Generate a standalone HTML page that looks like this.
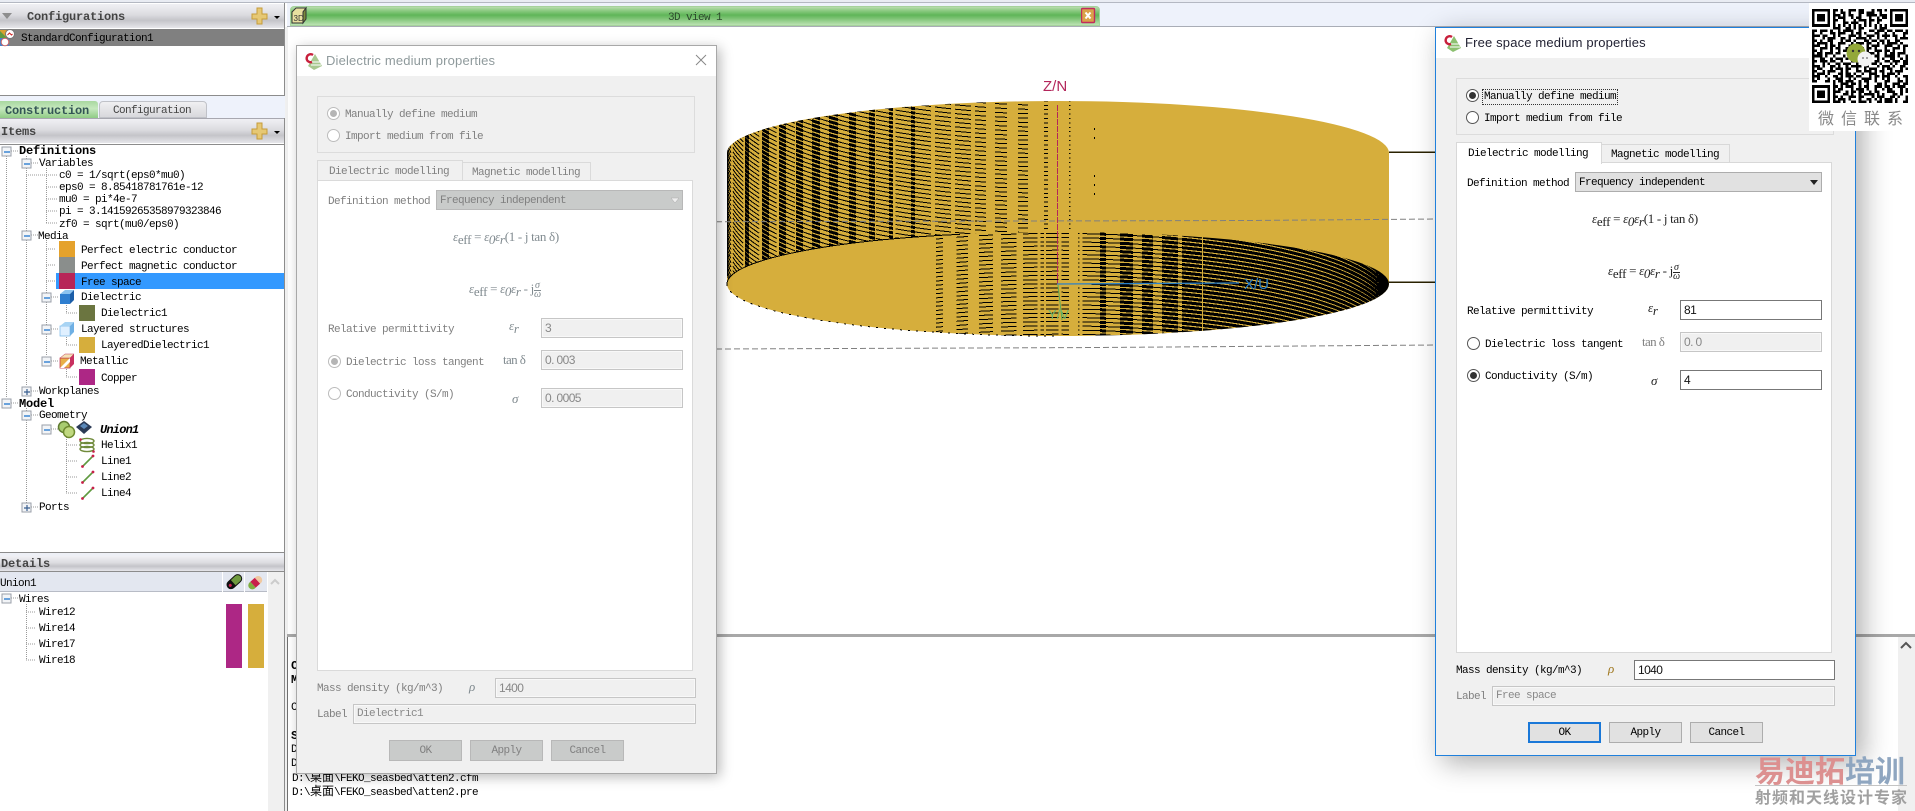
<!DOCTYPE html>
<html lang="en"><head><meta charset="utf-8"><title>FEKO</title>
<style>
html,body{margin:0;padding:0;background:#fff}
#p{position:relative;width:1915px;height:811px;overflow:hidden;background:#fff}
.a{position:absolute}
.t{position:absolute;margin-top:1px;white-space:pre;font:11px/12px "Liberation Mono","Noto Sans CJK SC",monospace;letter-spacing:-.6px;color:#000}
.b{font:bold 12px/12px "Liberation Mono","Noto Sans CJK SC",monospace;letter-spacing:-.2px}
.cj{font:12px/12px "Noto Sans CJK SC",sans-serif;letter-spacing:0}
.hd{position:absolute;left:0;width:284px;background:linear-gradient(#f0f0f4 0,#dcdce0 45%,#c4c4c9 68%,#e6e6ea 100%)}
.dlg{position:absolute;width:419px;height:727px;background:#f0f0f0;border:1px solid #a8a8a8;box-shadow:3px 3px 12px rgba(0,0,0,.28)}
.dlg .tb{position:absolute;left:0;top:0;width:419px;height:30px;background:#fff}
.dlg .ttl{position:absolute;left:29px;top:6px;white-space:pre;font:13px/17px "Liberation Sans",sans-serif;letter-spacing:.16px;color:#8f9a9c}
.gr{position:absolute;left:20px;top:50px;width:376px;height:55px;border:1px solid #dcdcdc}
.tab{position:absolute;box-sizing:border-box;border:1px solid #d8d8d8;border-bottom:0}
.pane{position:absolute;left:20px;top:134px;width:374px;height:489px;background:#fff;border:1px solid #d8d8d8}
.r{position:absolute;box-sizing:border-box;width:13px;height:13px;border:1px solid #555;border-radius:50%;background:#fff}
.r.on:after{content:"";position:absolute;left:2px;top:2px;width:7px;height:7px;border-radius:50%;background:#333}
.in{position:absolute;box-sizing:border-box;height:20px;background:#fff;border:1px solid #777}
.in.dis{background:#f0f0f0;border:1px solid #c6c6c6;box-shadow:inset 0 0 0 1px #f8f8f8}
.in span{position:absolute;left:3px;top:3px;white-space:pre;font:12px/13px "Liberation Sans",sans-serif;letter-spacing:-.6px;color:#111}
.in.dis span{color:#888}
.in.m span{font:11px/13px "Liberation Mono",monospace}
.cb{position:absolute;box-sizing:border-box;left:139px;top:144px;width:247px;height:20px;background:#e1e1e1;border:1px solid #adadad}
.btn{position:absolute;box-sizing:border-box;top:694px;width:73px;height:21px;background:#e1e1e1;border:1px solid #adadad;text-align:center;font:11px/20px "Liberation Mono",monospace;letter-spacing:-.6px;color:#000}
.f{position:absolute;white-space:pre;font:13px/16px "Liberation Serif",serif;color:#222;letter-spacing:-.3px}
.f i{font-style:italic}
.f u{text-decoration:none;position:relative;top:3px}
.d1 .t{color:#808080}
.d1 .f{color:#808a8f}
.d1 .tab,.d1 .pane{border-color:#dadada}
.d1 .cb{background:#c9cbca;border-color:#b8b8b8}
.d1 .btn{background:#c9cbca;border-color:#b8b8b8;color:#808080}
.d1 .r{border-color:#bcbcbc}
.d1 .r.on:after{background:#b5b5b5}
.d2{border:1px solid #1f80dc;box-shadow:7px 7px 26px rgba(0,0,0,.32);}
.d2 .ttl{color:#223}
.g{color:#808080!important}
</style></head><body><div id="p">

<!-- top strip / tab bar -->
<div class="a" style="left:0;top:0;width:1915px;height:2px;background:#e9ecf3"></div>
<div class="a" style="left:0;top:2px;width:1915px;height:1px;background:#b4b8c2"></div>
<div class="a" style="left:287px;top:3px;width:1628px;height:23px;background:#eef2fb"></div>
<div class="a" style="left:287px;top:26px;width:1628px;height:1px;background:#a9adb6"></div>
<div class="a" style="left:290px;top:6px;width:810px;height:20px;box-sizing:border-box;border:1px solid #a6d29c;border-radius:4px 4px 0 0;background:linear-gradient(#b8dcae 0,#8ccb82 20%,#5fb558 45%,#7fc476 65%,#bbe2b2 100%)"></div>
<div class="t" style="left:668px;top:11px;color:#2c4a2c">3D view 1</div>
<svg class="a" style="left:291px;top:6px" width="18" height="19" viewBox="0 0 18 19"><path d="M1 6L5 2H15L12 6V17H1Z" fill="#e8e0a0" stroke="#333"/><path d="M12 6L15 2V13L12 17Z" fill="#7b8a3c" stroke="#333"/><text x="2.5" y="15" font-family="Liberation Sans" font-size="8" fill="#333">3D</text></svg>
<svg class="a" style="left:1081px;top:7px" width="15" height="17"><rect x=".5" y="1.5" width="13" height="14" fill="#d9a24a" stroke="#c22b5c" stroke-width="1.4" rx="1"/><path d="M4.5 5.5L9.5 11.5M9.5 5.5L4.5 11.5" stroke="#fff" stroke-width="2"/></svg>

<!-- 3D view -->
<svg class="a" style="left:0;top:0" width="1915" height="811">
<defs>
<path id="wl" d="M727 1a331 100 0 0 0 662 0m-662 4.4a331 100 0 0 0 662 0m-662 4.4a331 100 0 0 0 662 0m-662 4.4a331 100 0 0 0 662 0m-662 4.4a331 100 0 0 0 662 0m-662 4.4a331 100 0 0 0 662 0m-662 4.4a331 100 0 0 0 662 0m-662 4.4a331 100 0 0 0 662 0m-662 4.4a331 100 0 0 0 662 0m-662 4.4a331 100 0 0 0 662 0m-662 4.4a331 100 0 0 0 662 0m-662 4.4a331 100 0 0 0 662 0m-662 4.4a331 100 0 0 0 662 0m-662 4.4a331 100 0 0 0 662 0m-662 4.4a331 100 0 0 0 662 0m-662 4.4a331 100 0 0 0 662 0m-662 4.4a331 100 0 0 0 662 0m-662 4.4a331 100 0 0 0 662 0m-662 4.4a331 100 0 0 0 662 0m-662 4.4a331 100 0 0 0 662 0m-662 4.4a331 100 0 0 0 662 0m-662 4.4a331 100 0 0 0 662 0m-662 4.4a331 100 0 0 0 662 0m-662 4.4a331 100 0 0 0 662 0m-662 4.4a331 100 0 0 0 662 0m-662 4.4a331 100 0 0 0 662 0m-662 4.4a331 100 0 0 0 662 0m-662 4.4a331 100 0 0 0 662 0m-662 4.4a331 100 0 0 0 662 0m-662 4.4a331 100 0 0 0 662 0m-662 4.4a331 100 0 0 0 662 0m-662 4.4a331 100 0 0 0 662 0m-662 4.4a331 100 0 0 0 662 0m-662 4.4a331 100 0 0 0 662 0m-662 4.4a331 100 0 0 0 662 0m-662 4.4a331 100 0 0 0 662 0m-662 4.4a331 100 0 0 0 662 0m-662 4.4a331 100 0 0 0 662 0m-662 4.4a331 100 0 0 0 662 0m-662 4.4a331 100 0 0 0 662 0m-662 4.4a331 100 0 0 0 662 0m-662 4.4a331 100 0 0 0 662 0m-662 4.4a331 100 0 0 0 662 0m-662 4.4a331 100 0 0 0 662 0m-662 4.4a331 100 0 0 0 662 0m-662 4.4a331 100 0 0 0 662 0m-662 4.4a331 100 0 0 0 662 0m-662 4.4a331 100 0 0 0 662 0m-662 4.4a331 100 0 0 0 662 0m-662 4.4a331 100 0 0 0 662 0m-662 4.4a331 100 0 0 0 662 0m-662 4.4a331 100 0 0 0 662 0m-662 4.4a331 100 0 0 0 662 0m-662 4.4a331 100 0 0 0 662 0m-662 4.4a331 100 0 0 0 662 0m-662 4.4a331 100 0 0 0 662 0m-662 4.4a331 100 0 0 0 662 0m-662 4.4a331 100 0 0 0 662 0m-662 4.4a331 100 0 0 0 662 0m-662 4.4a331 100 0 0 0 662 0m-662 4.4a331 100 0 0 0 662 0m-662 4.4a331 100 0 0 0 662 0" fill="none" stroke="#000"/>
<path id="fl" d="M727 284a331 80 0 0 1 662 0m-662 4.2a331 80 0 0 1 662 0m-662 4.2a331 80 0 0 1 662 0m-662 4.2a331 80 0 0 1 662 0m-662 4.2a331 80 0 0 1 662 0m-662 4.2a331 80 0 0 1 662 0m-662 4.2a331 80 0 0 1 662 0m-662 4.2a331 80 0 0 1 662 0m-662 4.2a331 80 0 0 1 662 0m-662 4.2a331 80 0 0 1 662 0m-662 4.2a331 80 0 0 1 662 0m-662 4.2a331 80 0 0 1 662 0m-662 4.2a331 80 0 0 1 662 0m-662 4.2a331 80 0 0 1 662 0m-662 4.2a331 80 0 0 1 662 0m-662 4.2a331 80 0 0 1 662 0m-662 4.2a331 80 0 0 1 662 0m-662 4.2a331 80 0 0 1 662 0m-662 4.2a331 80 0 0 1 662 0m-662 4.2a331 80 0 0 1 662 0m-662 4.2a331 80 0 0 1 662 0m-662 4.2a331 80 0 0 1 662 0m-662 4.2a331 80 0 0 1 662 0m-662 4.2a331 80 0 0 1 662 0m-662 4.2a331 80 0 0 1 662 0m-662 4.2a331 80 0 0 1 662 0m-662 4.2a331 80 0 0 1 662 0m-662 4.2a331 80 0 0 1 662 0m-662 4.2a331 80 0 0 1 662 0m-662 4.2a331 80 0 0 1 662 0m-662 4.2a331 80 0 0 1 662 0m-662 4.2a331 80 0 0 1 662 0" fill="none" stroke="#000"/>
<clipPath id="cw"><path d="M727 153A331 52 0 0 1 1389 153L1389 284A331 52 0 0 0 727 284Z"/></clipPath>
<clipPath id="cf"><ellipse cx="1058" cy="284" rx="331" ry="52"/></clipPath>
<clipPath id="wthin"><rect x="727" y="90" width="197" height="250"/><rect x="924" y="90" width="62" height="250"/><rect x="995" y="90" width="12" height="250"/><rect x="1018" y="90" width="10" height="250"/><rect x="1044" y="90" width="4" height="250"/><rect x="1069" y="90" width="4" height="250"/></clipPath>
<clipPath id="wthick"><rect x="745" y="90" width="4" height="250"/><rect x="762" y="90" width="7" height="250"/><rect x="779" y="90" width="7" height="250"/><rect x="796" y="90" width="7" height="250"/><rect x="812" y="90" width="8" height="250"/><rect x="829" y="90" width="9" height="250"/><rect x="849" y="90" width="7" height="250"/><rect x="869" y="90" width="6" height="250"/><rect x="889" y="90" width="4" height="250"/><rect x="911" y="90" width="4" height="250"/></clipPath>
<clipPath id="fthin"><rect x="936" y="220" width="7" height="130"/><rect x="956" y="220" width="12" height="130"/><rect x="979" y="220" width="14" height="130"/><rect x="1001" y="220" width="17" height="130"/><rect x="1023" y="220" width="21" height="130"/><rect x="1046" y="220" width="23" height="130"/><rect x="1078" y="220" width="22" height="130"/><rect x="1106" y="220" width="14" height="130"/><rect x="1133" y="220" width="9" height="130"/><rect x="1153" y="220" width="9" height="130"/><rect x="1178" y="220" width="4" height="130"/></clipPath>
<clipPath id="fthick"><rect x="1100" y="220" width="6" height="130"/><rect x="1120" y="220" width="13" height="130"/><rect x="1142" y="220" width="11" height="130"/><rect x="1162" y="220" width="16" height="130"/><rect x="1182" y="220" width="20" height="130"/><rect x="1203" y="220" width="186" height="130"/></clipPath>
</defs>
<path d="M727 153A331 52 0 0 1 1389 153L1389 284A331 52 0 0 1 727 284Z" fill="#d6ae3c"/>
<g shape-rendering="crispEdges">
<g clip-path="url(#cw)"><g clip-path="url(#wthin)"><use href="#wl" stroke-width="1" stroke-dasharray="16 4"/></g><g clip-path="url(#wthick)"><use href="#wl" stroke-width="3"/></g></g>
<g clip-path="url(#cf)"><g clip-path="url(#fthin)"><use href="#fl" stroke-width="1" stroke-dasharray="18 3"/></g><g clip-path="url(#fthick)"><use href="#fl" stroke-width="3"/></g></g>
<path d="M727 284A331 52 0 0 1 960 234.3" fill="none" stroke="#000"/>
<path d="M727 284A331 52 0 0 0 1058 336" fill="none" stroke="#000" stroke-dasharray="2 6"/>
<path d="M1094 128h1v2h-1zM1094 137h1v2h-1zM1094 175h1v2h-1zM1094 184h1v2h-1zM1094 193h1v2h-1z" fill="#000"/>
<path d="M1389 152h47M1389 282h47" stroke="#2a2200" stroke-width="1.5" fill="none"/>
</g>
<path d="M590 222L1250 220.5L1436 219" stroke="#808080" stroke-width="1" stroke-dasharray="6 3" fill="none"/>
<path d="M716 349L1100 347.5L1436 345" stroke="#808080" stroke-width="1" stroke-dasharray="6 3" fill="none"/>
<path d="M1057.5 105V284" stroke="#b3255a" stroke-width="1" stroke-dasharray="6 1" fill="none"/>
<path d="M1057 284L1239 283" stroke="#2a80c8" stroke-width="1.2" fill="none"/>
<path d="M1058 285L1062 320" stroke="#5aab5a" stroke-width="1" fill="none"/>
<text x="1043" y="91" font-family="Liberation Sans" font-size="15" fill="#b3255a">Z/N</text>
<text x="1244" y="289" font-family="Liberation Sans" font-size="15" fill="#2a80c8">X/U</text>
<text x="1048" y="319" font-family="Liberation Sans" font-size="13" fill="#6cb76c">Y/V</text>
</svg>

<!-- Console -->
<div class="a" style="left:285px;top:27px;width:3px;height:784px;background:#f0f0f0"></div>
<div class="a" style="left:287px;top:634px;width:1628px;height:3px;background:#a8a8a8"></div>
<div class="a" style="left:287px;top:637px;width:1628px;height:174px;background:#fff"></div>
<div class="a" style="left:287px;top:637px;width:1px;height:174px;background:#707070"></div>
<div class="t b" style="left:291px;top:659px">C</div>
<div class="t b" style="left:291px;top:673px">M</div>
<div class="t" style="left:291px;top:701px">C</div>
<div class="t b" style="left:291px;top:729px">S</div>
<div class="t" style="left:291px;top:743px">D</div>
<div class="t" style="left:291px;top:757px">D</div>
<div class="t" style="left:292px;top:770px">D:\<span class="cj">桌面</span>\FEKO_seasbed\atten2.cfm</div>
<div class="t" style="left:292px;top:784px">D:\<span class="cj">桌面</span>\FEKO_seasbed\atten2.pre</div>
<div class="a" style="left:1898px;top:637px;width:17px;height:174px;background:#f0f0f0"></div>
<svg class="a" style="left:1899px;top:640px" width="14" height="12"><path d="M2 8L7 3L12 8" fill="none" stroke="#555" stroke-width="2"/></svg>

<!-- Left panel -->
<div class="a" style="left:0;top:0;width:285px;height:811px;background:#fff"></div>
<div class="a" style="left:0;top:0;width:285px;height:2px;background:#e9ecf3"></div>
<div class="a" style="left:0;top:2px;width:285px;height:1px;background:#b4b8c2"></div>
<div class="a" style="left:284px;top:3px;width:1px;height:808px;background:#8c8c8c"></div>
<div class="hd" style="top:4px;height:24px"></div>
<div class="t b" style="left:27px;top:10px;color:#444">Configurations</div>
<div class="a" style="left:0;top:29px;width:284px;height:17px;background:#808080"></div>
<div class="t" style="left:21px;top:32px;color:#000">StandardConfiguration1</div>
<div class="a" style="left:0;top:95px;width:284px;height:1px;background:#8c8c8c"></div>
<div class="a" style="left:0;top:96px;width:285px;height:22px;background:#eef2fb"></div>
<div class="a" style="left:0;top:101px;width:98px;height:17px;background:linear-gradient(#a9d8a0,#c6e8be 45%,#8fcb85);border-radius:0 3px 0 0"></div>
<div class="a" style="left:99px;top:101px;width:108px;height:17px;box-sizing:border-box;border:1px solid #c0c2c8;border-radius:4px 4px 0 0;background:linear-gradient(#f0f0f2,#d8d8dc)"></div>
<div class="t b" style="left:5px;top:104px;color:#355">Construction</div>
<div class="t" style="left:113px;top:104px;color:#444">Configuration</div>
<div class="a" style="left:0;top:118px;width:284px;height:1px;background:#a8a8b0"></div>
<div class="hd" style="top:119px;height:24px"></div>
<div class="t b" style="left:1px;top:125px;color:#444">Items</div>
<div class="a" style="left:0;top:144px;width:284px;height:1px;background:#8c8c8c"></div>
<div class="a" style="left:56px;top:273px;width:228px;height:16px;background:#3399ff"></div>
<div class="a" style="left:0;top:552px;width:284px;height:1px;background:#8c8c8c"></div>
<div class="a" style="left:0;top:553px;width:284px;height:3px;background:#eef0f6"></div>
<div class="hd" style="top:556px;height:15px"></div>
<div class="t b" style="left:1px;top:557px;color:#444">Details</div>
<div class="a" style="left:0;top:571px;width:284px;height:1px;background:#8c8c8c"></div>
<div class="a" style="left:0;top:572px;width:222px;height:19px;background:#e3e7f0;border-bottom:1px solid #b8bcc6"></div>
<div class="a" style="left:223px;top:572px;width:21px;height:19px;background:#e3e7f0;border-bottom:1px solid #b8bcc6"></div>
<div class="a" style="left:245px;top:572px;width:22px;height:19px;background:#e3e7f0;border-bottom:1px solid #b8bcc6"></div>
<div class="a" style="left:268px;top:572px;width:16px;height:239px;background:#f0f0f0"></div>
<div class="a" style="left:226px;top:604px;width:16px;height:64px;background:#ad2785"></div>
<div class="a" style="left:248px;top:604px;width:16px;height:64px;background:#d6ae3c"></div>

<svg class="a" style="left:0;top:0" width="285" height="811">
<defs>
<g id="mn"><rect x="-4.5" y="-4.5" width="9" height="9" fill="#f2f4f7" stroke="#9a9fa8"/><path d="M-2.5 .5h6" stroke="#2f7fd0" stroke-width="1.4"/></g>
<g id="pl"><rect x="-4.5" y="-4.5" width="9" height="9" fill="#f2f4f7" stroke="#9a9fa8"/><path d="M-2.5 .5h6M.5 -2.5v6" stroke="#3a5f90" stroke-width="1.2"/></g>
<path id="plus" d="M0 6h5V0h5v6h5v5h-5v5H5v-5H0z" fill="#e6c874" stroke="#c69c3a"/>
<g id="ln"><path d="M1 12L12 1" stroke="#5f9a3f" stroke-width="1.6"/><circle cx="1.5" cy="11.5" r="1.4" fill="#c8204a"/><circle cx="12" cy="1" r="1.4" fill="#c8204a"/></g>
</defs>
<path d="M2 13h10l-5 6z" fill="#8e8e8e"/>
<use href="#plus" x="252" y="8"/><path d="M274 16h6l-3 3z" fill="#000"/>
<use href="#plus" x="252" y="123"/><path d="M274 131h6l-3 3z" fill="#000"/>
<rect x="0" y="30" width="9" height="8" fill="#d9a030"/><path d="M0 31l7 7H0z" fill="#5f9a3f"/><rect x="0" y="38" width="9" height="8" fill="#4a80c8"/><circle cx="10" cy="34" r="4.5" fill="#fff" stroke="#777"/><path d="M7.500 35l2-2 2 2 1-1" stroke="#c22" fill="none"/><circle cx="5" cy="42" r="3.8" fill="#fff" stroke="#c66"/>
<g stroke="#999" stroke-dasharray="1 1" fill="none">
<path d="M6.5 156V398M26.5 156V386M46.5 168V223M46.5 240V356M66.5 303V313M66.5 335V345M66.5 367V377M26.5 408V507M66.5 435V493M26.5 604V660"/>
<path d="M11 151h8M31 163h8M26 175h20M46 175h12M46 187h12M46 199h12M46 211h12M46 223h12M31 235h8M46 249h10M46 265h10M46 281h10M51 297h8M66 313h12M51 329h8M66 345h12M51 361h8M66 377h12M31 391h8M11 403h8M31 415h8M51 429h8M66 445h12M66 461h12M66 477h12M66 493h12M31 507h8M11 598h8M26 612h10M26 628h10M26 644h10M26 660h10"/>
</g>
<use href="#mn" x="6.5" y="151.5"/><use href="#mn" x="26.5" y="163.5"/><use href="#mn" x="26.5" y="235.5"/><use href="#mn" x="46.5" y="297.5"/><use href="#mn" x="46.5" y="329.5"/><use href="#mn" x="46.5" y="361.5"/><use href="#pl" x="26.5" y="391.5"/><use href="#mn" x="6.5" y="403.5"/><use href="#mn" x="26.5" y="415.5"/><use href="#mn" x="46.5" y="429.5"/><use href="#pl" x="26.5" y="507.5"/><use href="#mn" x="6.5" y="598.5"/>
<rect x="59" y="241" width="16" height="16" fill="#e5a22c"/><rect x="59" y="257" width="16" height="16" fill="#8a8e8c"/><rect x="59" y="273" width="16" height="16" fill="#b72558"/>
<rect x="79" y="305" width="16" height="16" fill="#6b7540"/><rect x="79" y="337" width="16" height="16" fill="#d6ae3c"/><rect x="79" y="369" width="16" height="16" fill="#ad2785"/>
<g transform="translate(59,289)"><path d="M1 5L11 5V15H1Z" fill="#2f7fd0"/><path d="M1 5L6 1H15L11 5Z" fill="#8cc4f0"/><path d="M11 5L15 1V11L11 15Z" fill="#1c5ea8"/></g>
<g transform="translate(59,321)"><path d="M1 5L11 5V15H1Z" fill="#e0f0ff" stroke="#7ab8e8" stroke-width=".7"/><path d="M1 5L6 1H15L11 5Z" fill="#a8d4f4"/><path d="M11 5L15 1V11L11 15Z" fill="#6fb0e4"/></g>
<g transform="translate(59,353)"><path d="M1 5L11 5V15H1Z" fill="#e8b048" stroke="#c03050" stroke-width=".7"/><path d="M1 15L11 5V9L5 15Z" fill="#fff"/><path d="M1 5L6 1H15L11 5Z" fill="#f4e2b8" stroke="#c03050" stroke-width=".5"/><path d="M11 5L15 1V11L11 15Z" fill="#c83060"/></g>
<circle cx="64" cy="427" r="5.5" fill="#a8cc70" stroke="#5f7a30" stroke-width="1.5"/><circle cx="69" cy="432" r="5.5" fill="#c0d880" stroke="#6f8a30" stroke-width="1.5"/>
<path d="M76 427L84 421L92 427L84 434Z" fill="#2b3a55"/><path d="M80 426L84 423L88 426L84 429Z" fill="#5a88b8"/>
<g fill="none" stroke="#6f8a3a" stroke-width="1.4"><ellipse cx="87" cy="441" rx="7" ry="2.6"/><ellipse cx="87" cy="445" rx="7" ry="2.6"/><ellipse cx="87" cy="449" rx="7" ry="2.6"/></g><circle cx="80.500" cy="439.500" r="1.300" fill="#c8204a"/><circle cx="93.500" cy="451.500" r="1.300" fill="#c8204a"/>
<use href="#ln" x="81" y="455"/><use href="#ln" x="81" y="471"/><use href="#ln" x="81" y="487"/>
<g transform="rotate(-42 234 582)"><rect x="226" y="578" width="17" height="8" rx="4" fill="#6f9a3f" stroke="#111"/><path d="M226 582a4 4 0 0 1 4 -4h3v8h-3a4 4 0 0 1 -4 -4z" fill="#111"/><circle cx="229" cy="582" r="1.5" fill="#d02050"/></g>
<g transform="rotate(-42 256 582)"><path d="M252 578h-1a4 4 0 0 0 0 8h1z" fill="#7fae3f"/><rect x="252" y="578" width="6" height="8" fill="#c8204a"/><path d="M258 578h1a4 4 0 0 1 0 8h-1z" fill="#f0c8a0"/></g>
<path d="M271 584l4-4 4 4" stroke="#ccc" stroke-width="2" fill="none"/>
</svg>

<div class="t b" style="left:19px;top:144px">Definitions</div>
<div class="t" style="left:39px;top:157px">Variables</div>
<div class="t" style="left:59px;top:169px">c0 = 1/sqrt(eps0*mu0)</div>
<div class="t" style="left:59px;top:181px">eps0 = 8.85418781761e-12</div>
<div class="t" style="left:59px;top:193px">mu0 = pi*4e-7</div>
<div class="t" style="left:59px;top:205px">pi = 3.14159265358979323846</div>
<div class="t" style="left:59px;top:218px">zf0 = sqrt(mu0/eps0)</div>
<div class="t" style="left:38px;top:230px">Media</div>
<div class="t" style="left:81px;top:244px">Perfect electric conductor</div>
<div class="t" style="left:81px;top:260px">Perfect magnetic conductor</div>
<div class="t" style="left:81px;top:276px">Free space</div>
<div class="t" style="left:81px;top:291px">Dielectric</div>
<div class="t" style="left:101px;top:307px">Dielectric1</div>
<div class="t" style="left:81px;top:323px">Layered structures</div>
<div class="t" style="left:101px;top:339px">LayeredDielectric1</div>
<div class="t" style="left:80px;top:355px">Metallic</div>
<div class="t" style="left:101px;top:372px">Copper</div>
<div class="t" style="left:39px;top:385px">Workplanes</div>
<div class="t b" style="left:19px;top:397px">Model</div>
<div class="t" style="left:39px;top:409px">Geometry</div>
<div class="t b" style="left:100px;top:423px;font-style:italic;letter-spacing:-.8px">Union1</div>
<div class="t" style="left:101px;top:439px">Helix1</div>
<div class="t" style="left:101px;top:455px">Line1</div>
<div class="t" style="left:101px;top:471px">Line2</div>
<div class="t" style="left:101px;top:487px">Line4</div>
<div class="t" style="left:39px;top:501px">Ports</div>
<div class="t" style="left:0;top:577px">Union1</div>
<div class="t" style="left:19px;top:593px">Wires</div>
<div class="t" style="left:39px;top:606px">Wire12</div>
<div class="t" style="left:39px;top:622px">Wire14</div>
<div class="t" style="left:39px;top:638px">Wire17</div>
<div class="t" style="left:39px;top:654px">Wire18</div>

<!-- Dialog 1 -->
<div class="dlg d1" style="left:296px;top:45px">
<div class="tb"></div>
<svg class="a" style="left:8px;top:5px" width="18" height="20"><path d="M10 3L17 15L9 19L3 15Z" fill="#a8c890"/><path d="M6 11h10M6 14h10" stroke="#fff"/><path d="M8 4a4 4 0 1 0 -1 7" fill="none" stroke="#c8203c" stroke-width="2.4"/></svg>
<div class="ttl">Dielectric medium properties</div>
<svg class="a" style="left:397px;top:7px" width="14" height="14"><path d="M2 2L12 12M12 2L2 12" stroke="#888" stroke-width="1"/></svg>
<div class="gr"></div>
<div class="r on" style="left:30px;top:61px"></div><div class="t" style="left:48px;top:62px">Manually define medium</div>
<div class="r" style="left:30px;top:83px"></div><div class="t" style="left:48px;top:84px">Import medium from file</div>
<div class="tab" style="left:20px;top:114px;width:146px;height:21px;background:#f0f0f0"></div>
<div class="tab" style="left:165px;top:116px;width:129px;height:19px;background:#f0f0f0"></div>
<div class="pane"></div>
<div class="t" style="left:32px;top:119px">Dielectric modelling</div>
<div class="t" style="left:175px;top:120px">Magnetic modelling</div>
<div class="t" style="left:31px;top:149px">Definition method</div>
<div class="cb"><div class="t" style="left:3px;top:3px">Frequency independent</div><svg class="a" style="left:233px;top:6px" width="10" height="8"><path d="M1 1h8l-4 5z" fill="#eee" stroke="#aaa" stroke-width=".5"/></svg></div>
<div class="f" style="left:156px;top:183px"><i>ε</i><u>eff</u> = <i>ε</i><u><i>0</i></u><i>ε</i><u><i>r</i></u>(1 - j tan δ)</div>
<div class="f" style="left:172px;top:235px"><i>ε</i><u>eff</u> = <i>ε</i><u><i>0</i></u><i>ε</i><u><i>r</i></u> - j<span style="display:inline-block;vertical-align:middle;font:italic 10px/8px 'Liberation Serif',serif;text-align:center"><span style="display:block;border-bottom:1px solid #808a8f">σ</span>ω</span></div>
<div class="t" style="left:31px;top:277px">Relative permittivity</div>
<div class="f" style="left:212px;top:272px"><i>ε</i><u><i>r</i></u></div>
<div class="in dis" style="left:244px;top:272px;width:142px"><span>3</span></div>
<div class="r on" style="left:31px;top:309px"></div><div class="t" style="left:49px;top:310px">Dielectric loss tangent</div>
<div class="f" style="left:206px;top:306px;letter-spacing:-.6px">tan δ</div>
<div class="in dis" style="left:244px;top:304px;width:142px"><span>0. 003</span></div>
<div class="r" style="left:31px;top:341px"></div><div class="t" style="left:49px;top:342px">Conductivity (S/m)</div>
<div class="f" style="left:215px;top:345px"><i>σ</i></div>
<div class="in dis" style="left:244px;top:342px;width:142px"><span>0. 0005</span></div>
<div class="t" style="left:20px;top:636px">Mass density (kg/m^3)</div>
<div class="f" style="left:172px;top:633px"><i>ρ</i></div>
<div class="in dis" style="left:198px;top:632px;width:201px"><span>1400</span></div>
<div class="t" style="left:20px;top:662px">Label</div>
<div class="in dis m" style="left:56px;top:658px;width:343px"><span>Dielectric1</span></div>
<div class="btn" style="left:92px">OK</div><div class="btn" style="left:173px">Apply</div><div class="btn" style="left:254px">Cancel</div>
</div>

<!-- Dialog 2 -->
<div class="dlg d2" style="left:1435px;top:27px">
<div class="tb"></div>
<svg class="a" style="left:8px;top:5px" width="18" height="20"><path d="M10 3L17 15L9 19L3 15Z" fill="#8cc070"/><path d="M6 11h10M6 14h10" stroke="#fff"/><path d="M8 4a4 4 0 1 0 -1 7" fill="none" stroke="#c8203c" stroke-width="2.4"/></svg>
<div class="ttl">Free space medium properties</div>
<div class="gr"></div>
<div class="r on" style="left:30px;top:61px"></div><div class="t" style="left:48px;top:62px;outline:1px dotted #333;outline-offset:1px">Manually define medium</div>
<div class="r" style="left:30px;top:83px"></div><div class="t" style="left:48px;top:84px">Import medium from file</div>
<div class="tab" style="left:20px;top:114px;width:146px;height:22px;background:#fff;z-index:2;border-bottom:0"></div>
<div class="tab" style="left:165px;top:116px;width:129px;height:19px;background:#f0f0f0"></div>
<div class="pane"></div>
<div class="t" style="left:32px;top:119px;z-index:3">Dielectric modelling</div>
<div class="t" style="left:175px;top:120px">Magnetic modelling</div>
<div class="t" style="left:31px;top:149px">Definition method</div>
<div class="cb"><div class="t" style="left:3px;top:3px">Frequency independent</div><svg class="a" style="left:233px;top:6px" width="10" height="8"><path d="M1 1h8l-4 5z" fill="#222"/></svg></div>
<div class="f" style="left:156px;top:183px"><i>ε</i><u>eff</u> = <i>ε</i><u><i>0</i></u><i>ε</i><u><i>r</i></u>(1 - j tan δ)</div>
<div class="f" style="left:172px;top:235px"><i>ε</i><u>eff</u> = <i>ε</i><u><i>0</i></u><i>ε</i><u><i>r</i></u> - j<span style="display:inline-block;vertical-align:middle;font:italic 10px/8px 'Liberation Serif',serif;text-align:center"><span style="display:block;border-bottom:1px solid #222">σ</span>ω</span></div>
<div class="t" style="left:31px;top:277px">Relative permittivity</div>
<div class="f" style="left:212px;top:272px"><i>ε</i><u><i>r</i></u></div>
<div class="in" style="left:244px;top:272px;width:142px"><span>81</span></div>
<div class="r" style="left:31px;top:309px"></div><div class="t" style="left:49px;top:310px">Dielectric loss tangent</div>
<div class="f g" style="left:206px;top:306px;letter-spacing:-.6px">tan δ</div>
<div class="in dis" style="left:244px;top:304px;width:142px"><span>0. 0</span></div>
<div class="r on" style="left:31px;top:341px"></div><div class="t" style="left:49px;top:342px">Conductivity (S/m)</div>
<div class="f" style="left:215px;top:345px"><i>σ</i></div>
<div class="in" style="left:244px;top:342px;width:142px"><span>4</span></div>
<div class="t" style="left:20px;top:636px">Mass density (kg/m^3)</div>
<div class="f" style="left:172px;top:633px"><i style="color:#a07820">ρ</i></div>
<div class="in" style="left:198px;top:632px;width:201px"><span>1040</span></div>
<div class="t g" style="left:20px;top:662px">Label</div>
<div class="in dis m" style="left:56px;top:658px;width:343px"><span>Free space</span></div>
<div class="btn" style="left:92px;border:2px solid #1a78d8;line-height:18px">OK</div><div class="btn" style="left:173px">Apply</div><div class="btn" style="left:254px">Cancel</div>
</div>

<!-- QR -->
<div class="a" style="left:1809px;top:3px;width:106px;height:128px;background:#fff"></div>
<svg class="a" style="left:1812px;top:9px" width="96" height="94" viewBox="0 0 37 37" preserveAspectRatio="none" shape-rendering="crispEdges">
<g fill="none" stroke="#000" stroke-width="1">
<path d="M8 .5h21" stroke-dasharray="2 1 1 2 3 1 2 3 1 1"/>
<path d="M8 1.500h21" stroke-dasharray="1 2 2 1 1 3 2 1 3 2"/>
<path d="M8 2.500h21" stroke-dasharray="3 1 1 1 2 2 1 2 4 1"/>
<path d="M8 3.500h21" stroke-dasharray="1 1 3 2 1 1 2 3 1 2"/>
<path d="M8 4.500h21" stroke-dasharray="2 2 1 3 1 1 3 1 2 1"/>
<path d="M8 5.500h21" stroke-dasharray="1 3 2 1 3 2 1 1 1 2"/>
<path d="M8 6.500h21" stroke-dasharray="1 1 1 1 1 1 1 1 1 1"/>
<path d="M8 7.500h21" stroke-dasharray="3 2 2 1 1 1 2 4 1 1"/>
<path d="M0 8.500h37" stroke-dasharray="2 1 3 1 1 2 1 1 4 2 1 3 2 1 3 1"/>
<path d="M0 9.500h37" stroke-dasharray="1 2 1 3 2 1 3 2 1 1 2 1 1 3 2 2"/>
<path d="M0 10.500h37" stroke-dasharray="3 1 2 2 1 1 1 3 3 1 1 2 3 1 1 1"/>
<path d="M0 11.500h37" stroke-dasharray="1 3 1 1 3 2 2 1 1 2 4 1 1 2 1 2"/>
<path d="M0 12.500h37" stroke-dasharray="2 1 1 2 2 3 1 1 2 1 1 3 2 1 2 1"/>
<path d="M0 13.500h37" stroke-dasharray="1 1 4 1 1 2 3 2 1 1 3 1 2 2 1 1"/>
<path d="M0 14.500h37" stroke-dasharray="3 2 1 1 2 1 1 3 2 1 2 2 1 1 3 2"/>
<path d="M0 15.500h37" stroke-dasharray="1 2 3 1 1 1 2 2 3 3 1 1 2 1 1 3"/>
<path d="M0 16.500h37" stroke-dasharray="2 1 1 3 1 2 1 1 2 4 2 1 1 2 3 1"/>
<path d="M0 17.500h37" stroke-dasharray="1 1 2 1 3 1 2 3 1 3 1 2 3 1 1 2"/>
<path d="M0 18.500h37" stroke-dasharray="4 1 1 2 1 3 1 1 2 3 2 1 1 1 2 2"/>
<path d="M0 19.500h37" stroke-dasharray="1 2 2 2 1 1 3 1 1 2 3 2 1 3 1 1"/>
<path d="M0 20.500h37" stroke-dasharray="2 1 3 1 2 2 1 3 2 1 1 1 3 1 2 2"/>
<path d="M0 21.500h37" stroke-dasharray="1 3 1 1 1 2 2 1 3 2 1 3 1 1 2 1"/>
<path d="M0 22.500h37" stroke-dasharray="3 1 1 2 2 1 1 2 1 1 4 1 2 3 1 1"/>
<path d="M0 23.500h37" stroke-dasharray="1 1 2 3 1 1 3 1 2 2 1 2 1 1 3 2"/>
<path d="M0 24.500h37" stroke-dasharray="2 2 1 1 3 2 1 1 1 3 2 1 3 1 1 1"/>
<path d="M0 25.500h37" stroke-dasharray="1 1 3 1 1 3 2 1 2 1 1 2 1 2 3 2"/>
<path d="M0 26.500h37" stroke-dasharray="3 2 1 2 2 1 1 1 3 1 2 3 1 1 2 1"/>
<path d="M0 27.500h37" stroke-dasharray="1 1 1 3 1 2 3 2 1 1 1 2 4 1 1 2"/>
<path d="M0 28.500h37" stroke-dasharray="2 3 2 1 1 1 2 1 3 2 1 1 2 2 1 3"/>
<path d="M8 29.500h29" stroke-dasharray="1 2 3 1 2 1 1 2 1 3 2 1"/>
<path d="M8 30.500h29" stroke-dasharray="2 1 1 1 3 2 1 1 2 2 3 1"/>
<path d="M8 31.500h29" stroke-dasharray="1 1 2 3 1 1 3 1 1 2 1 2"/>
<path d="M8 32.500h29" stroke-dasharray="3 2 1 1 2 1 2 2 1 1 2 3"/>
<path d="M8 33.500h29" stroke-dasharray="1 3 2 1 1 2 1 1 4 1 1 1"/>
<path d="M8 34.500h29" stroke-dasharray="2 1 1 2 3 1 2 3 1 1 3 2"/>
<path d="M8 35.500h29" stroke-dasharray="1 1 3 1 1 3 1 2 2 1 1 1"/>
<path d="M8 36.500h29" stroke-dasharray="3 1 1 2 2 1 3 1 1 2 2 1"/>
</g>
<g fill="#000"><path d="M0 0h7v7H0zM30 0h7v7h-7zM0 30h7v7H0z" fill-rule="evenodd"/></g>
<g fill="#fff"><path d="M1 1h5v5H1zM31 1h5v5h-5zM1 31h5v5H1z"/></g>
<g fill="#000"><path d="M2 2h3v3H2zM32 2h3v3h-3zM2 32h3v3H2z"/></g>
</svg>
<svg class="a" style="left:1840px;top:40px" width="40" height="32"><circle cx="16" cy="13" r="9.500" fill="#93a83a"/><circle cx="13" cy="11" r="1.200" fill="#333"/><circle cx="19" cy="11" r="1.200" fill="#333"/><circle cx="25" cy="19" r="7.500" fill="#f2f2f2"/><circle cx="23" cy="18" r="1" fill="#888"/><circle cx="27" cy="18" r="1" fill="#888"/></svg>
<div class="a" style="left:1818px;top:106px;white-space:pre;font:16px/22px 'Noto Sans CJK SC',sans-serif;letter-spacing:7px;color:#888">微信联系</div>

<!-- watermark -->
<div class="a" style="left:1755px;top:752px;white-space:pre;font:bold 30px/34px 'Noto Sans CJK SC',sans-serif;color:#dc9090">易迪拓<span style="color:#8fa6c0">培训</span></div>
<div class="a" style="left:1755px;top:785px;width:152px;height:1px;background:#c4c4c4"></div>
<div class="a" style="left:1755px;top:786px;white-space:pre;font:bold 16px/20px 'Noto Sans CJK SC',sans-serif;letter-spacing:1px;color:#a0a0a0">射频和天线设计专家</div>

</div></body></html>
